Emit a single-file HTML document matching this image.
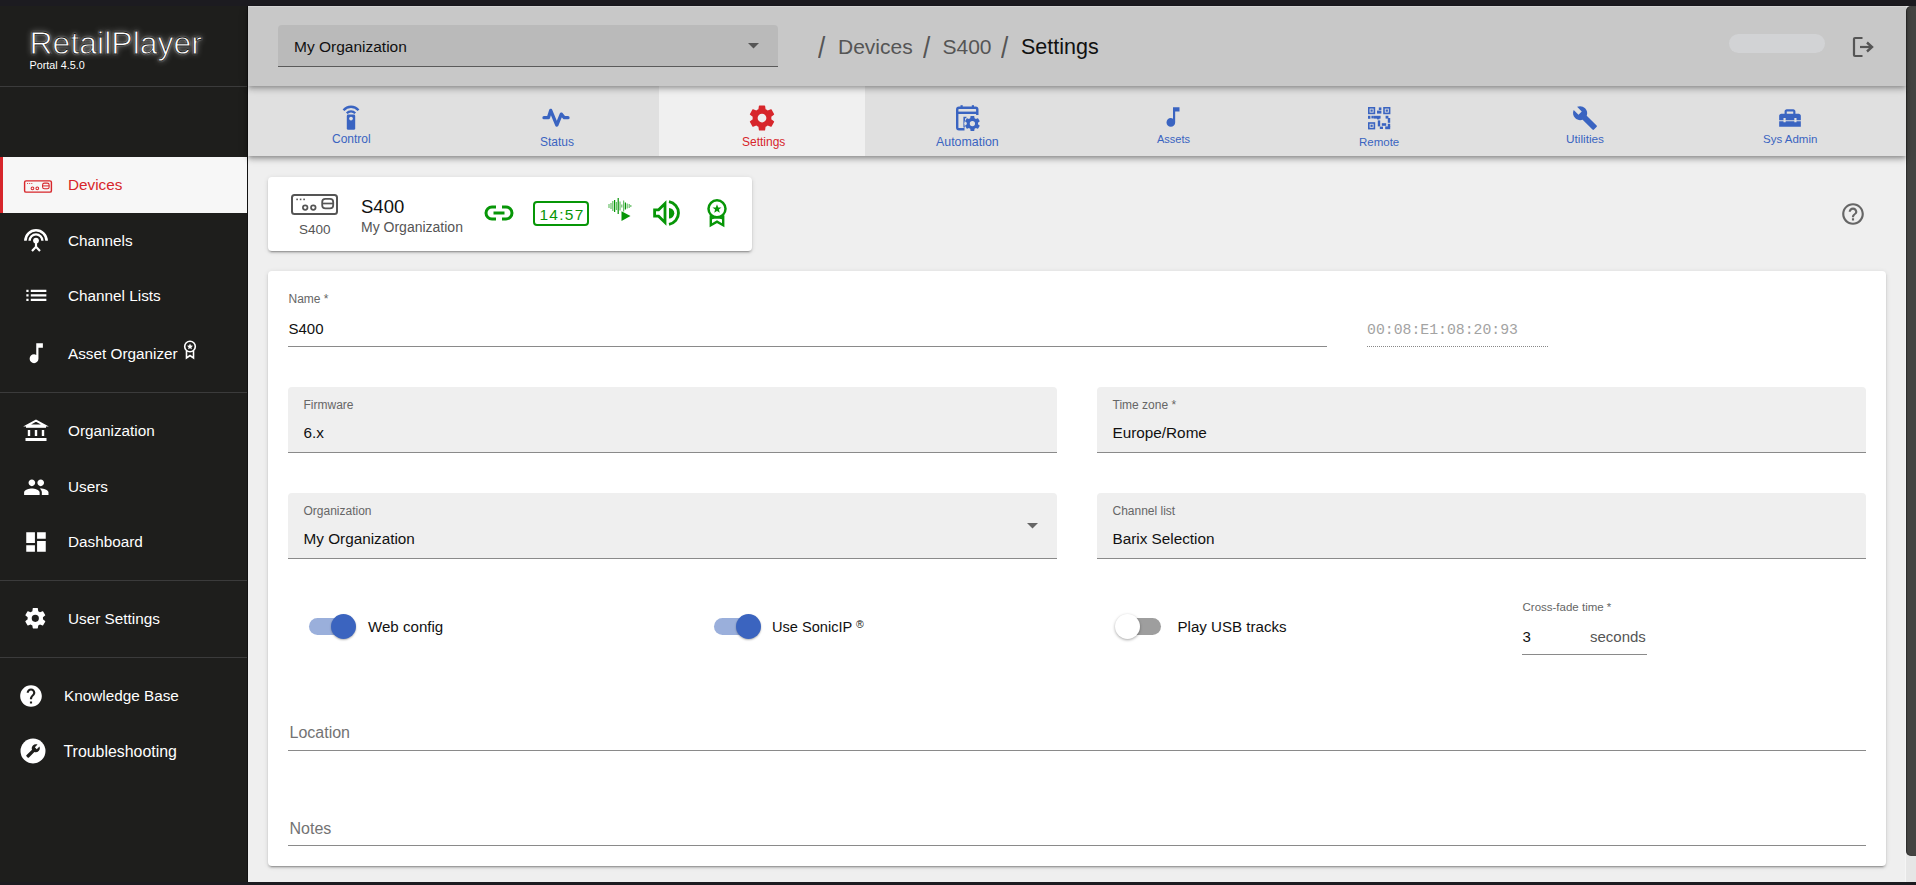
<!DOCTYPE html>
<html><head><meta charset="utf-8"><title>RetailPlayer</title><style>
*{box-sizing:border-box;margin:0;padding:0}
html,body{width:1916px;height:885px;overflow:hidden;background:#1c1b20;font-family:"Liberation Sans",sans-serif}
.t{position:absolute;line-height:1;white-space:nowrap}
.r{position:absolute}
.s{position:absolute;overflow:visible}
</style></head><body>
<div class="r" style="left:0px;top:0px;width:1916px;height:6px;background:#1c1b20;"></div>
<div class="r" style="left:0px;top:6px;width:247px;height:876px;background:#1e1e1c;"></div>
<div class="r" style="left:247px;top:6px;width:1px;height:876px;background:#121212;"></div>
<div class="r" style="left:248px;top:6px;width:1658px;height:876px;background:#efefef;"></div>
<div class="r" style="left:0px;top:882px;width:1916px;height:3px;background:#1c1b20;"></div>
<div class="t" style="left:29.5px;top:27px;font-size:32px;color:#fff;font-family:'Liberation Sans',sans-serif;font-weight:normal;letter-spacing:0px;-webkit-text-stroke:0.85px #1e1e1c;text-shadow:0 0 2px rgba(255,255,255,.8),0 0 6px rgba(255,255,255,.5)">RetailPlayer</div>
<div class="t" style="left:29.5px;top:60px;font-size:10.8px;color:#fff;font-family:'Liberation Sans',sans-serif;">Portal 4.5.0</div>
<div class="r" style="left:0px;top:86px;width:247px;height:1px;background:#3b3b3b;"></div>
<div class="r" style="left:0px;top:392px;width:247px;height:1px;background:#3b3b3b;"></div>
<div class="r" style="left:0px;top:580px;width:247px;height:1px;background:#3b3b3b;"></div>
<div class="r" style="left:0px;top:657px;width:247px;height:1px;background:#3b3b3b;"></div>
<div class="r" style="left:0px;top:157px;width:247px;height:56px;background:#f7f7f7;"></div>
<div class="r" style="left:0px;top:157px;width:3px;height:56px;background:#d7262b;"></div>
<svg class="s" style="left:24px;top:180px;" width="28" height="13" viewBox="0 0 47 21"><rect x="1" y="1" width="45" height="19" rx="2.5" fill="none" stroke="#d7262b" stroke-width="2.4"/><rect x="5.3" y="4.6" width="1.6" height="1.6" fill="#d7262b"/><rect x="8.8" y="4.6" width="1.6" height="1.6" fill="#d7262b"/><rect x="12.3" y="4.6" width="1.6" height="1.6" fill="#d7262b"/><circle cx="14.2" cy="13.6" r="2.3" fill="none" stroke="#d7262b" stroke-width="1.7"/><circle cx="22.3" cy="13.6" r="2.3" fill="none" stroke="#d7262b" stroke-width="1.7"/><rect x="31.2" y="4.8" width="11" height="9.6" rx="3.2" fill="none" stroke="#d7262b" stroke-width="1.8"/><line x1="31.5" y1="9.5" x2="42" y2="9.5" stroke="#d7262b" stroke-width="1.7"/></svg>
<div class="t" style="left:68px;top:177px;font-size:15.3px;color:#d7262b;font-family:'Liberation Sans',sans-serif;">Devices</div>
<div class="t" style="left:68px;top:233px;font-size:15.3px;color:#fff;font-family:'Liberation Sans',sans-serif;">Channels</div>
<div class="t" style="left:68px;top:288px;font-size:15.3px;color:#fff;font-family:'Liberation Sans',sans-serif;">Channel Lists</div>
<div class="t" style="left:68px;top:346px;font-size:15.3px;color:#fff;font-family:'Liberation Sans',sans-serif;">Asset Organizer</div>
<div class="t" style="left:68px;top:423px;font-size:15.3px;color:#fff;font-family:'Liberation Sans',sans-serif;">Organization</div>
<div class="t" style="left:68px;top:479px;font-size:15.3px;color:#fff;font-family:'Liberation Sans',sans-serif;">Users</div>
<div class="t" style="left:68px;top:534px;font-size:15.3px;color:#fff;font-family:'Liberation Sans',sans-serif;">Dashboard</div>
<div class="t" style="left:68px;top:611px;font-size:15.3px;color:#fff;font-family:'Liberation Sans',sans-serif;">User Settings</div>
<div class="t" style="left:64px;top:688px;font-size:15.3px;color:#fff;font-family:'Liberation Sans',sans-serif;">Knowledge Base</div>
<div class="t" style="left:63.5px;top:744px;font-size:15.9px;color:#fff;font-family:'Liberation Sans',sans-serif;">Troubleshooting</div>
<svg class="s" style="left:23px;top:228px;" width="26" height="25" viewBox="0 0 26 25"><path d="M2.4 12.8 A10.6 10.6 0 0 1 23.6 12.8" fill="none" stroke="#fff" stroke-width="2.6"/><path d="M6.6 12.8 A6.4 6.4 0 0 1 19.4 12.8" fill="none" stroke="#fff" stroke-width="2.4"/><circle cx="13" cy="12.6" r="2.9" fill="#fff"/><path d="M13 14 V18.8 M9 23 L13 18.8 L17 23" fill="none" stroke="#fff" stroke-width="2.2"/></svg>
<svg class="s" style="left:22.5px;top:282.2px;" width="26.7" height="26.7" viewBox="0 0 24 24"><path d="M3 13h2v-2H3v2zm0 4h2v-2H3v2zm0-8h2V7H3v2zm4 4h14v-2H7v2zm0 4h14v-2H7v2zM7 7v2h14V7H7z" fill="#fff"/></svg>
<svg class="s" style="left:22.5px;top:339.5px;" width="26.5" height="26.5" viewBox="0 0 24 24"><path d="M12 3v10.55c-.59-.34-1.27-.55-2-.55-2.210 0-4 1.79-4 4s1.79 4 4 4 4-1.79 4-4V7h4V3h-6z" fill="#fff"/></svg>
<svg class="s" style="left:182px;top:340px;" width="16" height="19" viewBox="0 0 16 19"><circle cx="8" cy="6.5" r="5.3" fill="none" stroke="#fff" stroke-width="1.6"/><path d="M8 3.6 L8.9 5.6 L11 5.8 L9.4 7.2 L9.9 9.3 L8 8.2 L6.1 9.3 L6.6 7.2 L5 5.8 L7.1 5.6Z" fill="#fff"/><path d="M4.5 11 V18 L8 15.5 L11.5 18 V11" fill="none" stroke="#fff" stroke-width="1.6"/></svg>
<svg class="s" style="left:24.5px;top:418.5px;" width="22" height="23" viewBox="0 0 22 23"><path d="M11 1.6 L2 6.6 H20Z" fill="none" stroke="#fff" stroke-width="2" stroke-linejoin="miter"/><rect x="1" y="6.6" width="20" height="2.2" fill="#fff"/><rect x="2.8" y="11" width="2.4" height="6" fill="#fff"/><rect x="9.8" y="11" width="2.4" height="6" fill="#fff"/><rect x="16.8" y="11" width="2.4" height="6" fill="#fff"/><rect x="0.5" y="19" width="21" height="3" fill="#fff"/></svg>
<svg class="s" style="left:22.5px;top:474px;" width="26.6" height="26.6" viewBox="0 0 24 24"><path d="M16 11c1.66 0 2.99-1.34 2.99-3S17.66 5 16 5c-1.66 0-3 1.34-3 3s1.34 3 3 3zm-8 0c1.66 0 2.99-1.34 2.99-3S9.66 5 8 5C6.34 5 5 6.34 5 8s1.34 3 3 3zm0 2c-2.33 0-7 1.17-7 3.5V19h14v-2.5c0-2.330-4.67-3.5-7-3.5zm8 0c-.29 0-.62.02-.97.05 1.16.84 1.97 1.97 1.97 3.45V19h6v-2.5c0-2.33-4.67-3.5-7-3.5z" fill="#fff"/></svg>
<svg class="s" style="left:23px;top:529px;" width="26" height="26" viewBox="0 0 24 24"><path d="M3 13h8V3H3v10zm0 8h8v-6H3v6zm10 0h8V11h-8v10zm0-18v6h8V3h-8z" fill="#fff"/></svg>
<svg class="s" style="left:23.3px;top:606px;" width="24.6" height="24.6" viewBox="0 0 24 24"><path d="M12,15.5A3.5,3.5 0 0,1 8.5,12A3.5,3.5 0 0,1 12,8.5A3.5,3.5 0 0,1 15.5,12A3.5,3.5 0 0,1 12,15.5M19.43,12.97C19.47,12.65 19.5,12.33 19.5,12C19.5,11.67 19.47,11.34 19.43,11L21.54,9.37C21.73,9.22 21.78,8.95 21.66,8.73L19.66,5.27C19.54,5.05 19.27,4.96 19.05,5.05L16.56,6.05C16.04,5.66 15.5,5.32 14.87,5.07L14.5,2.42C14.46,2.18 14.25,2 14,2H10C9.75,2 9.54,2.18 9.5,2.42L9.13,5.07C8.5,5.32 7.96,5.66 7.44,6.05L4.95,5.05C4.730,4.96 4.46,5.05 4.34,5.27L2.34,8.73C2.21,8.95 2.27,9.22 2.46,9.37L4.57,11C4.53,11.34 4.5,11.67 4.5,12C4.5,12.33 4.53,12.65 4.57,12.97L2.46,14.63C2.27,14.78 2.21,15.05 2.34,15.27L4.34,18.73C4.46,18.95 4.73,19.03 4.95,18.95L7.44,17.94C7.96,18.34 8.5,18.68 9.13,18.93L9.5,21.58C9.54,21.82 9.75,22 10,22H14C14.25,22 14.46,21.82 14.5,21.58L14.87,18.93C15.5,18.67 16.04,18.34 16.56,17.94L19.05,18.95C19.27,19.03 19.54,18.95 19.66,18.73L21.66,15.27C21.78,15.05 21.73,14.78 21.54,14.63L19.43,12.97Z" fill="#fff"/></svg>
<svg class="s" style="left:18px;top:683px;" width="26" height="26" viewBox="0 0 24 24"><path d="M12 2C6.48 2 2 6.48 2 12s4.48 10 10 10 10-4.48 10-10S17.52 2 12 2zm1 17h-2v-2h2v2zm2.07-7.75l-.9.92C13.45 12.9 13 13.5 13 15h-2v-.5c0-1.1.45-2.1 1.17-2.83l1.24-1.26c.37-.36.59-.86.59-1.41 0-1.1-.9-2-2-2s-2 .9-2 2H8c0-2.21 1.79-4 4-4s4 1.79 4 4c0 .88-.36 1.68-.93 2.25z" fill="#fff"/></svg>
<svg class="s" style="left:20px;top:738px;" width="26" height="26" viewBox="0 0 26 26"><circle cx="13" cy="13" r="12.5" fill="#fff"/><g transform="translate(13 13) rotate(0) scale(0.62) translate(-12 -12)"><path d="M22.7 19l-9.1-9.1c.9-2.3.4-5-1.5-6.9-2-2-5-2.4-7.4-1.3L9 6 6 9 1.6 4.7C.4 7.1.9 10.1 2.9 12.1c1.9 1.9 4.6 2.4 6.9 1.5l9.1 9.1c.4.4 1 .4 1.4 0l2.3-2.3c.5-.4.5-1.1.1-1.4z" fill="#1e1e1c" transform="translate(24 0) scale(-1 1)"/></g></svg>
<div class="r" style="left:248px;top:6px;width:1658px;height:80px;background:#c8c8c8;box-shadow:0 2px 4px -1px rgba(0,0,0,.2),0 4px 5px 0 rgba(0,0,0,.14),0 1px 10px 0 rgba(0,0,0,.12);z-index:3"></div>
<div class="r" style="left:248px;top:6px;width:1658px;height:1px;background:#d4d4d4;z-index:4"></div>
<div class="r" style="left:278px;top:25px;width:500px;height:42px;background:#bababa;border-radius:4px 4px 0 0;border-bottom:1px solid #5a5a5a;z-index:4"></div>
<div class="t" style="left:294px;top:39px;font-size:15.5px;color:#111;font-family:'Liberation Sans',sans-serif;z-index:5">My Organization</div>
<svg class="s" style="left:748px;top:43px;z-index:5" width="11" height="6" viewBox="0 0 11 6"><path d="M0 0 H11 L5.5 5.5Z" fill="#555"/></svg>
<div class="t" style="left:818px;top:34px;font-size:29px;color:#555;font-family:'Liberation Sans',sans-serif;z-index:5;transform:scaleX(0.9);transform-origin:left">/</div>
<div class="t" style="left:838px;top:36px;font-size:21px;color:#555;font-family:'Liberation Sans',sans-serif;z-index:5">Devices</div>
<div class="t" style="left:923px;top:34px;font-size:29px;color:#555;font-family:'Liberation Sans',sans-serif;z-index:5;transform:scaleX(0.9);transform-origin:left">/</div>
<div class="t" style="left:942.5px;top:36px;font-size:21px;color:#555;font-family:'Liberation Sans',sans-serif;z-index:5">S400</div>
<div class="t" style="left:1001px;top:34px;font-size:29px;color:#555;font-family:'Liberation Sans',sans-serif;z-index:5;transform:scaleX(0.9);transform-origin:left">/</div>
<div class="t" style="left:1021px;top:37px;font-size:21.5px;color:#111;font-family:'Liberation Sans',sans-serif;z-index:5">Settings</div>
<div class="r" style="left:1729px;top:34px;width:96px;height:19px;background:#d2d3d5;border-radius:10px;z-index:5"></div>
<svg class="s" style="left:1852px;top:36px;z-index:5" width="22" height="22" viewBox="0 0 22 22"><path d="M10.5 2 H3 Q2 2 2 3 V19 Q2 20 3 20 H10.5" fill="none" stroke="#555" stroke-width="2.2"/><path d="M8 11 H19" stroke="#555" stroke-width="2.2"/><path d="M15 6.5 L20 11 L15 15.5" fill="none" stroke="#555" stroke-width="2.4"/></svg>
<div class="r" style="left:248px;top:86px;width:1658px;height:70px;background:#e0e0e0;box-shadow:0 2px 4px -1px rgba(0,0,0,.25),0 4px 5px 0 rgba(0,0,0,.16),0 1px 10px 0 rgba(0,0,0,.13);z-index:2"></div>
<div class="r" style="left:659px;top:86px;width:206px;height:70px;background:#f0f0f0;z-index:2"></div>
<svg class="s" style="left:342px;top:104px;z-index:3" width="18" height="27" viewBox="0 0 18 27"><path d="M1.5 6.2 A10 10 0 0 1 16.5 6.2" fill="none" stroke="#3a64c1" stroke-width="2.4"/><path d="M4.8 9.2 A5.6 5.6 0 0 1 13.2 9.2" fill="none" stroke="#3a64c1" stroke-width="2.2"/><rect x="4.8" y="10.6" width="8.4" height="15.2" rx="1.4" fill="#3a64c1"/><circle cx="9" cy="14.6" r="1.85" fill="#e0e0e0"/></svg>
<div class="t" style="left:332px;top:133px;font-size:12px;color:#3a64c1;font-family:'Liberation Sans',sans-serif;z-index:3">Control</div>
<svg class="s" style="left:541px;top:107px;z-index:3" width="30" height="22" viewBox="0 0 30 22"><path d="M3 10.7 H7.4 L9.7 3.4 L15.8 18.1 L20.3 7.1 L23.3 10.7 H27" fill="none" stroke="#3a64c1" stroke-width="3.3" stroke-linecap="round" stroke-linejoin="round"/></svg>
<div class="t" style="left:540px;top:136px;font-size:12px;color:#3a64c1;font-family:'Liberation Sans',sans-serif;z-index:3">Status</div>
<svg class="s" style="left:747px;top:103px;z-index:3" width="30" height="30" viewBox="0 0 24 24"><path d="M12,15.5A3.5,3.5 0 0,1 8.5,12A3.5,3.5 0 0,1 12,8.5A3.5,3.5 0 0,1 15.5,12A3.5,3.5 0 0,1 12,15.5M19.43,12.97C19.47,12.65 19.5,12.33 19.5,12C19.5,11.67 19.47,11.34 19.43,11L21.54,9.37C21.73,9.22 21.78,8.95 21.66,8.73L19.66,5.27C19.54,5.05 19.27,4.96 19.05,5.05L16.56,6.05C16.04,5.66 15.5,5.32 14.87,5.07L14.5,2.42C14.46,2.18 14.25,2 14,2H10C9.75,2 9.54,2.18 9.5,2.42L9.13,5.07C8.5,5.32 7.96,5.66 7.44,6.05L4.95,5.05C4.730,4.96 4.46,5.05 4.34,5.27L2.34,8.73C2.21,8.95 2.27,9.22 2.46,9.37L4.57,11C4.53,11.34 4.5,11.67 4.5,12C4.5,12.33 4.53,12.65 4.57,12.97L2.46,14.63C2.27,14.78 2.21,15.05 2.34,15.27L4.34,18.73C4.46,18.95 4.73,19.03 4.95,18.95L7.44,17.94C7.96,18.34 8.5,18.68 9.13,18.93L9.5,21.58C9.54,21.82 9.75,22 10,22H14C14.25,22 14.46,21.82 14.5,21.58L14.87,18.93C15.5,18.67 16.04,18.34 16.56,17.94L19.05,18.95C19.27,19.03 19.54,18.95 19.66,18.73L21.66,15.27C21.78,15.05 21.73,14.78 21.54,14.63L19.43,12.97Z" fill="#d7262b"/></svg>
<div class="t" style="left:742px;top:136px;font-size:12px;color:#d7262b;font-family:'Liberation Sans',sans-serif;z-index:3">Settings</div>
<svg class="s" style="left:956px;top:104px;z-index:3" width="24" height="27" viewBox="0 0 24 27"><path d="M8.5 25.2 H3 Q1.2 25.2 1.2 23.5 V5.5 Q1.2 3.8 3 3.8 H19.5 Q21.3 3.8 21.3 5.5 V11" fill="none" stroke="#3a64c1" stroke-width="2.4"/><rect x="1.2" y="7.6" width="20.1" height="2.4" fill="#3a64c1"/><rect x="4.5" y="1.2" width="2.2" height="3.5" fill="#3a64c1"/><rect x="15.8" y="1.2" width="2.2" height="3.5" fill="#3a64c1"/><path d="M8.2 23.5 V13.5 H10.5" fill="none" stroke="#3a64c1" stroke-width="1.6"/><circle cx="16.4" cy="19.5" r="8.2" fill="#e0e0e0"/><g transform="translate(7.4 10.5) scale(0.75)"><path d="M12,15.5A3.5,3.5 0 0,1 8.5,12A3.5,3.5 0 0,1 12,8.5A3.5,3.5 0 0,1 15.5,12A3.5,3.5 0 0,1 12,15.5M19.43,12.97C19.47,12.65 19.5,12.33 19.5,12C19.5,11.67 19.47,11.34 19.43,11L21.54,9.37C21.73,9.22 21.78,8.95 21.66,8.73L19.66,5.27C19.54,5.05 19.27,4.96 19.05,5.05L16.56,6.05C16.04,5.66 15.5,5.32 14.87,5.07L14.5,2.42C14.46,2.18 14.25,2 14,2H10C9.75,2 9.54,2.18 9.5,2.42L9.13,5.07C8.5,5.32 7.96,5.66 7.44,6.05L4.95,5.05C4.730,4.96 4.46,5.05 4.34,5.27L2.34,8.73C2.21,8.95 2.27,9.22 2.46,9.37L4.57,11C4.53,11.34 4.5,11.67 4.5,12C4.5,12.33 4.53,12.65 4.57,12.97L2.46,14.63C2.27,14.78 2.21,15.05 2.34,15.27L4.34,18.73C4.46,18.95 4.73,19.03 4.95,18.95L7.44,17.94C7.96,18.34 8.5,18.68 9.13,18.93L9.5,21.58C9.54,21.82 9.75,22 10,22H14C14.25,22 14.46,21.82 14.5,21.58L14.87,18.93C15.5,18.67 16.04,18.34 16.56,17.94L19.05,18.95C19.27,19.03 19.54,18.95 19.66,18.73L21.66,15.27C21.78,15.05 21.73,14.78 21.54,14.63L19.43,12.97Z" fill="#3a64c1"/></g></svg>
<div class="t" style="left:936px;top:136px;font-size:12.4px;color:#3a64c1;font-family:'Liberation Sans',sans-serif;z-index:3">Automation</div>
<svg class="s" style="left:1160px;top:104px;z-index:3" width="26" height="26" viewBox="0 0 24 24"><path d="M12 3v10.55c-.59-.34-1.27-.55-2-.55-2.210 0-4 1.79-4 4s1.79 4 4 4 4-1.79 4-4V7h4V3h-6z" fill="#3a64c1"/></svg>
<div class="t" style="left:1157px;top:134px;font-size:11px;color:#3a64c1;font-family:'Liberation Sans',sans-serif;z-index:3">Assets</div>
<svg class="s" style="left:1368px;top:107px;z-index:3" width="22" height="22" viewBox="0 0 22 22"><rect x="0.8" y="0.8" width="5.6" height="5.6" fill="none" stroke="#3a64c1" stroke-width="1.6"/><rect x="2.5" y="2.5" width="2.2" height="2.2" fill="#3a64c1"/><rect x="16.0" y="0.8" width="5.6" height="5.6" fill="none" stroke="#3a64c1" stroke-width="1.6"/><rect x="17.7" y="2.5" width="2.2" height="2.2" fill="#3a64c1"/><rect x="0.8" y="16.0" width="5.6" height="5.6" fill="none" stroke="#3a64c1" stroke-width="1.6"/><rect x="2.5" y="17.7" width="2.2" height="2.2" fill="#3a64c1"/><rect x="10.8" y="0.4" width="2.6" height="2.6" fill="#3a64c1"/><rect x="9" y="3.6" width="4.4" height="3" fill="#3a64c1"/><rect x="0" y="8.8" width="2.4" height="3" fill="#3a64c1"/><rect x="3.4" y="8.8" width="2.4" height="2.6" fill="#3a64c1"/><rect x="5.8" y="8.8" width="6.8" height="2.8" fill="#3a64c1"/><rect x="9" y="10.4" width="2.4" height="2" fill="#3a64c1"/><rect x="17.6" y="8.8" width="2.8" height="2.8" fill="#3a64c1"/><rect x="19.8" y="11" width="2.4" height="4.8" fill="#3a64c1"/><rect x="9.8" y="13.4" width="2.4" height="6" fill="#3a64c1"/><rect x="13.8" y="16.2" width="4.4" height="2.6" fill="#3a64c1"/><rect x="11.8" y="19.6" width="3.2" height="2.4" fill="#3a64c1"/><rect x="17.2" y="19.4" width="5" height="2.8" fill="#3a64c1"/><rect x="19.8" y="16.8" width="2.4" height="3.4" fill="#3a64c1"/></svg>
<div class="t" style="left:1359px;top:137px;font-size:11.5px;color:#3a64c1;font-family:'Liberation Sans',sans-serif;z-index:3">Remote</div>
<svg class="s" style="left:1572px;top:105px;z-index:3" width="26" height="26" viewBox="0 0 24 24"><path d="M22.7 19l-9.1-9.1c.9-2.3.4-5-1.5-6.9-2-2-5-2.4-7.4-1.3L9 6 6 9 1.6 4.7C.4 7.1.9 10.1 2.9 12.1c1.9 1.9 4.6 2.4 6.9 1.5l9.1 9.1c.4.4 1 .4 1.4 0l2.3-2.3c.5-.4.5-1.1.1-1.4z" fill="#3a64c1"/></svg>
<div class="t" style="left:1566px;top:134px;font-size:11.8px;color:#3a64c1;font-family:'Liberation Sans',sans-serif;z-index:3">Utilities</div>
<svg class="s" style="left:1776.8px;top:104.7px;z-index:3" width="26" height="26" viewBox="0 0 24 24"><path d="M18 16H16V15H8V16H6V15H2V20H22V15H18V16M20 8H17V6C17 4.9 16.1 4 15 4H9C7.9 4 7 4.9 7 6V8H4C2.9 8 2 8.9 2 10V14H6V12H8V14H16V12H18V14H22V10C22 8.9 21.1 8 20 8M15 8H9V6H15V8Z" fill="#3a64c1"/></svg>
<div class="t" style="left:1763px;top:134px;font-size:11.5px;color:#3a64c1;font-family:'Liberation Sans',sans-serif;z-index:3">Sys Admin</div>
<div class="r" style="left:268px;top:177px;width:484px;height:74px;background:#fff;border-radius:4px;box-shadow:0 3px 1px -2px rgba(0,0,0,.2),0 2px 2px 0 rgba(0,0,0,.14),0 1px 5px 0 rgba(0,0,0,.12)"></div>
<svg class="s" style="left:291px;top:194px;" width="47" height="21" viewBox="0 0 47 21"><rect x="1" y="1" width="45" height="19" rx="2.5" fill="none" stroke="#555" stroke-width="2"/><rect x="5.3" y="4.6" width="1.6" height="1.6" fill="#555"/><rect x="8.8" y="4.6" width="1.6" height="1.6" fill="#555"/><rect x="12.3" y="4.6" width="1.6" height="1.6" fill="#555"/><circle cx="14.2" cy="13.6" r="2.3" fill="none" stroke="#555" stroke-width="1.7"/><circle cx="22.3" cy="13.6" r="2.3" fill="none" stroke="#555" stroke-width="1.7"/><rect x="31.2" y="4.8" width="11" height="9.6" rx="3.2" fill="none" stroke="#555" stroke-width="1.8"/><line x1="31.5" y1="9.5" x2="42" y2="9.5" stroke="#555" stroke-width="1.7"/></svg>
<div class="t" style="left:299px;top:223px;font-size:13.5px;color:#555;font-family:'Liberation Sans',sans-serif;">S400</div>
<div class="t" style="left:361px;top:198px;font-size:18.5px;color:#111;font-family:'Liberation Sans',sans-serif;">S400</div>
<div class="t" style="left:361px;top:220px;font-size:14px;color:#555;font-family:'Liberation Sans',sans-serif;">My Organization</div>
<svg class="s" style="left:484px;top:205px;" width="30" height="16" viewBox="0 0 30 16"><path d="M12 2 H8 A6 6 0 0 0 8 14 H12 M18 2 H22 A6 6 0 0 1 22 14 H18" fill="none" stroke="#079607" stroke-width="3"/><path d="M9.5 8 H20.5" stroke="#079607" stroke-width="3"/></svg>
<div class="r" style="left:533px;top:201px;width:56px;height:25px;background:transparent;border:2px solid #079607;border-radius:4px"></div>
<div class="t" style="left:539.5px;top:207px;font-size:15.5px;color:#079607;font-family:'Liberation Sans',sans-serif;letter-spacing:1.25px">14:57</div>
<svg class="s" style="left:607.5px;top:200px;" width="24" height="22" viewBox="0 0 24 22"><rect x="0.4" y="4.0" width="1.2" height="4" fill="#079607" opacity="0.6"/><rect x="2.4" y="3.0" width="1.2" height="6" fill="#079607" opacity="0.6"/><rect x="4.2" y="1.0" width="1.2" height="10" fill="#079607" opacity="0.6"/><rect x="6" y="0.0" width="1.2" height="12" fill="#079607" opacity="1"/><rect x="7.8" y="2.0" width="1.2" height="8" fill="#079607" opacity="0.6"/><rect x="9.6" y="-2.0" width="1.2" height="16" fill="#079607" opacity="1"/><rect x="11.4" y="1.5" width="1.2" height="9" fill="#079607" opacity="0.6"/><rect x="13.2" y="4.5" width="1.2" height="3" fill="#079607" opacity="0.6"/><rect x="15" y="0.5" width="1.2" height="11" fill="#079607" opacity="0.6"/><rect x="16.8" y="2.5" width="1.2" height="7" fill="#079607" opacity="1"/><rect x="18.6" y="3.5" width="1.2" height="5" fill="#079607" opacity="0.6"/><rect x="20.6" y="4.0" width="1.2" height="4" fill="#079607" opacity="0.6"/><rect x="22.2" y="5.0" width="1.2" height="2" fill="#079607" opacity="0.6"/><path d="M13.5 11.2 L22.5 16 L13.5 21Z" fill="#079607"/></svg>
<svg class="s" style="left:652px;top:200px;" width="28" height="26" viewBox="0 0 28 26"><path d="M2.6 9.8 H6.6 L13 3.6 V22.4 L6.6 16.2 H2.6Z" fill="none" stroke="#079607" stroke-width="2.8" stroke-linejoin="miter"/><path d="M17 8 A5.3 5.3 0 0 1 17 18.6Z" fill="#079607"/><path d="M17 1.6 A11.6 11.6 0 0 1 17 24.4" fill="none" stroke="#079607" stroke-width="2.9"/></svg>
<svg class="s" style="left:706px;top:199px;" width="22" height="28" viewBox="0 0 22 28"><circle cx="11" cy="9.8" r="8.5" fill="none" stroke="#079607" stroke-width="2.5"/><path d="M11 5.2 L12.2 8.4 L15.5 8.5 L12.9 10.5 L13.8 13.7 L11 11.9 L8.2 13.7 L9.1 10.5 L6.5 8.5 L9.8 8.4Z" fill="#079607"/><path d="M4.8 16.5 V26.2 L11 22.6 L17.2 26.2 V16.5" fill="none" stroke="#079607" stroke-width="2.4" stroke-linejoin="miter"/><path d="M5 19.5 Q11 17.5 17 19.5" fill="none" stroke="#079607" stroke-width="2"/></svg>
<svg class="s" style="left:1840px;top:201px;" width="26" height="26" viewBox="0 0 24 24"><path d="M11 18h2v-2h-2v2zm1-16C6.48 2 2 6.48 2 12s4.48 10 10 10 10-4.480 10-10S17.52 2 12 2zm0 18c-4.41 0-8-3.59-8-8s3.59-8 8-8 8 3.59 8 8-3.59 8-8 8zm0-14c-2.21 0-4 1.79-4 4h2c0-1.1.9-2 2-2s2 .9 2 2c0 2-3 1.75-3 5h2c0-2.25 3-2.5 3-5 0-2.21-1.79-4-4-4z" fill="#666"/></svg>
<div class="r" style="left:268px;top:271px;width:1618px;height:595px;background:#fff;border-radius:4px;box-shadow:0 3px 1px -2px rgba(0,0,0,.2),0 2px 2px 0 rgba(0,0,0,.14),0 1px 5px 0 rgba(0,0,0,.12)"></div>
<div class="t" style="left:288.5px;top:293px;font-size:12px;color:#666;font-family:'Liberation Sans',sans-serif;">Name *</div>
<div class="t" style="left:288.5px;top:321px;font-size:15px;color:#111;font-family:'Liberation Sans',sans-serif;">S400</div>
<div class="r" style="left:288px;top:346px;width:1039px;height:1px;background:#8a8a8a;"></div>
<div class="t" style="left:1367px;top:323px;font-size:14.8px;color:#a3a3a3;font-family:'Liberation Mono',monospace;">00:08:E1:08:20:93</div>
<div class="r" style="left:1367px;top:346px;width:181px;height:1px;background:transparent;border-top:1px dotted #888"></div>
<div class="r" style="left:288px;top:387px;width:769px;height:66px;background:#efefef;border-radius:4px 4px 0 0;border-bottom:1px solid #8a8a8a"></div><div class="t" style="left:303.5px;top:399px;font-size:12px;color:#666;font-family:'Liberation Sans',sans-serif;">Firmware</div><div class="t" style="left:303.5px;top:425px;font-size:15.3px;color:#111;font-family:'Liberation Sans',sans-serif;">6.x</div>
<div class="r" style="left:1097px;top:387px;width:769px;height:66px;background:#efefef;border-radius:4px 4px 0 0;border-bottom:1px solid #8a8a8a"></div><div class="t" style="left:1112.5px;top:399px;font-size:12px;color:#666;font-family:'Liberation Sans',sans-serif;">Time zone *</div><div class="t" style="left:1112.5px;top:425px;font-size:15.3px;color:#111;font-family:'Liberation Sans',sans-serif;">Europe/Rome</div>
<div class="r" style="left:288px;top:493px;width:769px;height:66px;background:#efefef;border-radius:4px 4px 0 0;border-bottom:1px solid #8a8a8a"></div><div class="t" style="left:303.5px;top:505px;font-size:12px;color:#666;font-family:'Liberation Sans',sans-serif;">Organization</div><div class="t" style="left:303.5px;top:531px;font-size:15.3px;color:#111;font-family:'Liberation Sans',sans-serif;">My Organization</div><svg class="s" style="left:1027px;top:523px;" width="11" height="6" viewBox="0 0 11 6"><path d="M0 0 H11 L5.5 5.5Z" fill="#666"/></svg>
<div class="r" style="left:1097px;top:493px;width:769px;height:66px;background:#efefef;border-radius:4px 4px 0 0;border-bottom:1px solid #8a8a8a"></div><div class="t" style="left:1112.5px;top:505px;font-size:12px;color:#666;font-family:'Liberation Sans',sans-serif;">Channel list</div><div class="t" style="left:1112.5px;top:531px;font-size:15.3px;color:#111;font-family:'Liberation Sans',sans-serif;">Barix Selection</div>
<div class="r" style="left:309px;top:618px;width:42px;height:17px;background:#9aafdb;border-radius:9px"></div><div class="r" style="left:331px;top:614px;width:25px;height:25px;background:#3b64bf;border-radius:50%;box-shadow:0 1px 2px rgba(0,0,0,.3)"></div><div class="t" style="left:368px;top:619px;font-size:15.1px;color:#111;font-family:'Liberation Sans',sans-serif;">Web config</div>
<div class="r" style="left:714px;top:618px;width:42px;height:17px;background:#9aafdb;border-radius:9px"></div><div class="r" style="left:736px;top:614px;width:25px;height:25px;background:#3b64bf;border-radius:50%;box-shadow:0 1px 2px rgba(0,0,0,.3)"></div><div class="t" style="left:772px;top:620px;font-size:14.6px;color:#111;font-family:'Liberation Sans',sans-serif;">Use SonicIP</div>
<div class="t" style="left:856px;top:619px;font-size:10.5px;color:#111;font-family:'Liberation Sans',sans-serif;">&reg;</div>
<div class="r" style="left:1120px;top:618px;width:41px;height:17px;background:#9e9e9e;border-radius:9px"></div>
<div class="r" style="left:1115px;top:614px;width:25px;height:25px;background:#fff;border-radius:50%;box-shadow:0 1px 3px rgba(0,0,0,.35)"></div>
<div class="t" style="left:1177.5px;top:619px;font-size:15.1px;color:#111;font-family:'Liberation Sans',sans-serif;">Play USB tracks</div>
<div class="t" style="left:1522.5px;top:602px;font-size:11.5px;color:#666;font-family:'Liberation Sans',sans-serif;">Cross-fade time *</div>
<div class="t" style="left:1522.5px;top:629px;font-size:15px;color:#111;font-family:'Liberation Sans',sans-serif;">3</div>
<div class="t" style="left:1590px;top:629px;font-size:15px;color:#555;font-family:'Liberation Sans',sans-serif;">seconds</div>
<div class="r" style="left:1522px;top:654px;width:125px;height:1px;background:#8a8a8a;"></div>
<div class="t" style="left:289.5px;top:725px;font-size:16px;color:#737373;font-family:'Liberation Sans',sans-serif;">Location</div>
<div class="r" style="left:288px;top:750px;width:1578px;height:1px;background:#8a8a8a;"></div>
<div class="t" style="left:289.5px;top:821px;font-size:16px;color:#737373;font-family:'Liberation Sans',sans-serif;">Notes</div>
<div class="r" style="left:288px;top:845px;width:1578px;height:1px;background:#8a8a8a;"></div>
<div class="r" style="left:1905px;top:6px;width:1px;height:876px;background:#f5f5f5;"></div>
<div class="r" style="left:1906px;top:6px;width:10px;height:876px;background:#e6e6e6;"></div>
<div class="r" style="left:1906px;top:6px;width:10px;height:850px;background:#444442;border-radius:5px 0 0 5px;box-shadow:inset 1px 0 1px rgba(0,0,0,.35)"></div>
</body></html>
